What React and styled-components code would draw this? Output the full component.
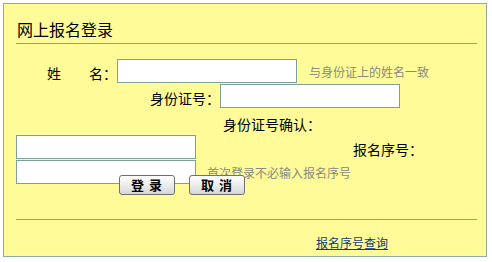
import React from "react";
import styled, { createGlobalStyle } from "styled-components";

const GlobalStyle = createGlobalStyle`
  body {
    margin: 0;
    background: #ffffff;
    font-family: "Noto Sans CJK SC", "DejaVu Sans", sans-serif;
  }
`;

const LoginSection = () => {
  return (
    <Panel>
      <GlobalStyle />
      <Title>网上报名登录</Title>

      <Row indent={31} top={15}>
        <Label>姓　　名：</Label>
        <Field type="text" />
        <Hint gap={12}>与身份证上的姓名一致</Hint>
      </Row>

      <Row indent={134} top={1}>
        <Label>身份证号：</Label>
        <Field type="text" />
      </Row>

      <LabelRow indent={207}>
        <Label>身份证号确认：</Label>
      </LabelRow>

      <Row top={0} align="flex-start">
        <Stack>
          <Field type="text" />
          <Field type="text" />
        </Stack>
        <Aside>
          <AsideLine indent={157}>
            <Label>报名序号：</Label>
          </AsideLine>
          <AsideLine indent={11}>
            <Hint>首次登录不必输入报名序号</Hint>
          </AsideLine>
        </Aside>
      </Row>

      <Buttons>
        <Button>登 录</Button>
        <Button>取 消</Button>
      </Buttons>

      <Footer>
        <QueryLink href="#">报名序号查询</QueryLink>
      </Footer>
    </Panel>
  );
};

const Panel = styled.div`
  box-sizing: border-box;
  margin: 3px;
  width: 484px;
  height: 254px;
  padding: 0 9px 0 12px;
  background: #fffb98;
  border: 1px solid #8fa8a3;
  display: flex;
  flex-direction: column;
`;

const Title = styled.div`
  margin-top: 15px;
  padding: 0 0 4px 1px;
  font-size: 16px;
  line-height: 20px;
  color: #000;
  border-bottom: 1px solid #9a9a8a;
`;

const Row = styled.div`
  display: flex;
  align-items: ${(p) => p.align || "center"};
  margin-top: ${(p) => p.top || 0}px;
  padding-left: ${(p) => p.indent || 0}px;
`;

const LabelRow = styled.div`
  display: flex;
  align-items: center;
  height: 27px;
  padding: 2px 0 0 ${(p) => p.indent}px;
  box-sizing: border-box;
`;

const Label = styled.span`
  font-size: 14px;
  line-height: 16px;
  padding-top: 3px;
  color: #000;
  white-space: nowrap;
`;

const Field = styled.input`
  box-sizing: border-box;
  width: 180px;
  height: 24px;
  margin: 0;
  border: 1px solid #7f9e97;
  background: #fff;
  outline: none;
`;

const Hint = styled.span`
  margin-left: ${(p) => p.gap || 0}px;
  padding-top: 2px;
  font-size: 12px;
  line-height: 14px;
  color: #8a8a80;
  white-space: nowrap;
`;

const Stack = styled.div`
  display: flex;
  flex-direction: column;
  gap: 1px;
`;

const Aside = styled.div`
  display: flex;
  flex-direction: column;
`;

const AsideLine = styled.div`
  display: flex;
  align-items: center;
  height: 24px;
  padding-left: ${(p) => p.indent}px;
  &:first-child {
    height: 25px;
  }
`;

const Buttons = styled.div`
  position: relative;
  display: flex;
  gap: 14px;
  margin-top: -9px;
  padding-left: 103px;
`;

const Button = styled.button`
  box-sizing: border-box;
  width: 56px;
  height: 20px;
  padding: 0;
  border: 1px solid #707070;
  border-radius: 3px;
  background: linear-gradient(#ffffff, #ececec 50%, #d6d6d6);
  font-family: "Noto Sans CJK SC", sans-serif;
  font-size: 13px;
  font-weight: bold;
  line-height: 18px;
  letter-spacing: 1px;
  color: #000;
`;

const Footer = styled.div`
  margin-top: 24px;
  padding: 9px 0 0 300px;
  border-top: 1px solid #9a9a8a;
`;

const QueryLink = styled.a`
  font-size: 12px;
  line-height: 16px;
  color: #123a7a;
  text-decoration: underline;
`;

export default LoginSection;
